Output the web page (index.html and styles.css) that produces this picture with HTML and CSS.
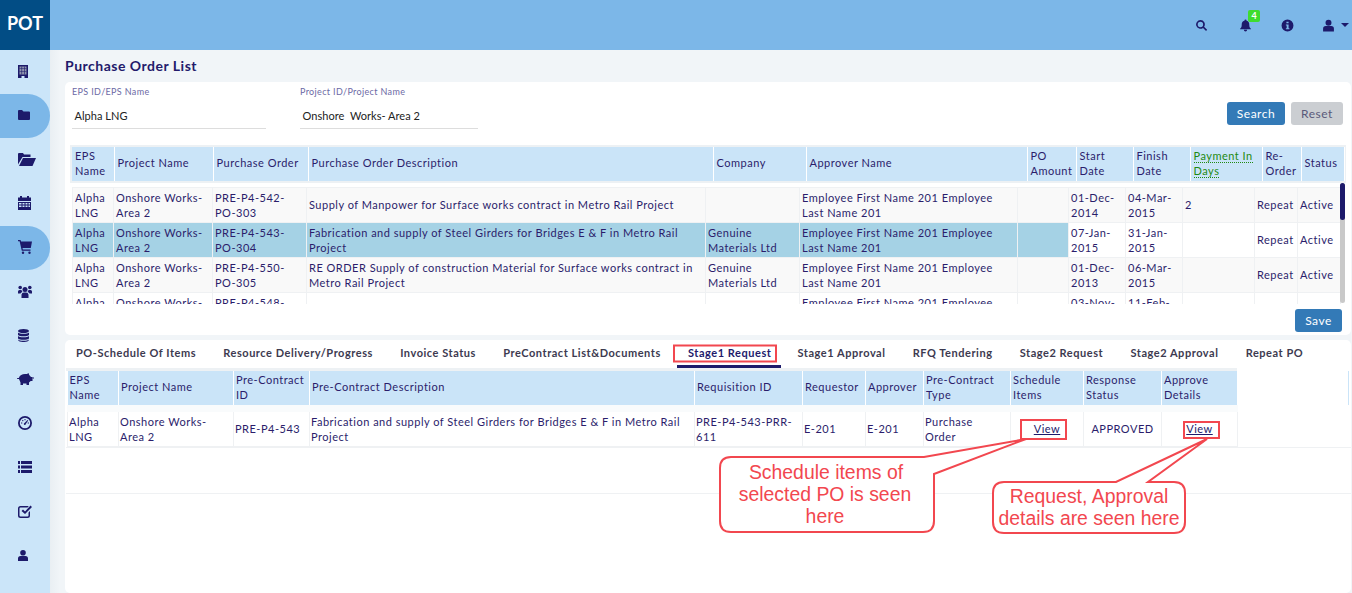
FILE: index.html
```html
<!DOCTYPE html>
<html lang="en">
<head>
    <meta charset="UTF-8">
    <title>Purchase Order List</title>
    <link rel="stylesheet" href="styles.css">
</head>
<body>
<div class="app">
    <aside class="sidebar">
        <div class="logo">POT</div>
        <nav class="side-nav">
            <a class="side-item"><svg class="side-icon" width="10" height="13" viewBox="0 0 10 13"><path d="M0 0h10v13H6.500v-2h-3v2H0z"/><path class="win" d="M1.500 1.500h7v8h-7z"/><path d="M3.500 1.500h.6v8h-.6z M6 1.500h.6v8H6z M1.500 3.500h7v.6h-7z M1.500 6h7v.6h-7z"/></svg></a>
            <a class="side-item active"><svg class="side-icon" width="12" height="10" viewBox="0 0 12 10"><path d="M0 1a1 1 0 0 1 1-1h3l1.500 1.500H11a1 1 0 0 1 1 1V9a1 1 0 0 1-1 1H1a1 1 0 0 1-1-1z"/></svg></a>
            <a class="side-item"><svg class="side-icon" width="18" height="13" viewBox="0 0 18 13"><path d="M0 11.500V1a1 1 0 0 1 1-1h4l1 1.500h6.500V4H4.500z"/><path d="M5 5h13l-3.500 8H1z"/></svg></a>
            <a class="side-item"><svg class="side-icon" width="13" height="14" viewBox="0 0 13 14"><path d="M2 0h2v1.500h5V0h2v1.500h2V5H0V1.500h2z"/><path fill-rule="evenodd" d="M0 6h13v8H0z M1 7v1.500h2.500V7z M4.500 7v1.500h2V7z M7.500 7v1.500h2V7z M10.500 7v1.500H12V7z M1 9.500V11h2.500V9.500z M4.500 9.500V11h2V9.500z M7.500 9.500V11h2V9.500z M10.500 9.500V11H12V9.500z"/></svg></a>
            <a class="side-item active"><svg class="side-icon" width="14" height="14" viewBox="0 0 14 14"><path d="M0 0h2.500l.6 1.500H14l-1.200 6.500H4.500l.3 1.500H12.500v1.200H3.800L1.600 1.200H0z"/><circle cx="5" cy="12.800" r="1.200"/><circle cx="11.500" cy="12.800" r="1.200"/></svg></a>
            <a class="side-item"><svg class="side-icon" width="14" height="13" viewBox="0 0 14 13"><circle cx="7" cy="4.500" r="2.500"/><circle cx="2.200" cy="2.500" r="1.800"/><circle cx="11.800" cy="2.500" r="1.800"/><path d="M3.500 13V9.500A2.500 2.500 0 0 1 6 7.500h2a2.500 2.500 0 0 1 2.500 2V13z M0 8.500V6.500A1.500 1.500 0 0 1 1.500 5H3.500a3.500 3.500 0 0 0 1 2 3.500 3.500 0 0 0-2 1.500z M14 8.500V6.500A1.500 1.500 0 0 0 12.500 5H10.500a3.500 3.500 0 0 1-1 2 3.500 3.500 0 0 1 2 1.500z"/></svg></a>
            <a class="side-item"><svg class="side-icon" width="11" height="13" viewBox="0 0 11 13"><ellipse cx="5.500" cy="2" rx="5.500" ry="2"/><path d="M0 3.500c1 1.700 10 1.700 11 0V6c-1 1.700-10 1.700-11 0z M0 7c1 1.700 10 1.700 11 0v2.500c-1 1.700-10 1.700-11 0z M0 10.500c1 1.700 10 1.700 11 0V11c-1 2.700-10 2.700-11 0z"/></svg></a>
            <a class="side-item"><svg class="side-icon piggy" width="17" height="12" viewBox="0 0 17 12"><path d="M11.500 0l.7 2 1.800 2h1.500v4h-1.800L12 9.500V12H9.500v-1.500H6V12H3.500V9.500L2 6H.3L0 5h1.800C3 2 5 1 8 1h2z"/><path d="M15.500 4.500h1.500v1h-1.500z"/></svg></a>
            <a class="side-item"><svg class="side-icon" width="14" height="14" viewBox="0 0 14 14"><path fill-rule="evenodd" d="M7 0a7 7 0 1 0 0 14a7 7 0 0 0 0-14z M7 1.800a5.200 5.200 0 1 1 0 10.400a5.200 5.200 0 0 1 0-10.400z"/><path d="M6.500 3h1v1.300h-1z M3 6.500h1.300v1H3z M9.700 6.500H11v1H9.700z M4 4.500l.8-.7.8 1-.7.7z M9.500 4l.7.6L7.800 8A1 1 0 1 1 6.500 7z"/></svg></a>
            <a class="side-item"><svg class="side-icon" width="14" height="12" viewBox="0 0 14 12"><path d="M0 0h2v3H0z M3 0h11v3H3z M0 4.500h2v3H0z M3 4.500h11v3H3z M0 9h2v3H0z M3 9h11v3H3z"/></svg></a>
            <a class="side-item"><svg class="side-icon" width="14" height="13" viewBox="0 0 14 13"><path d="M2.500 1h8.300L9.500 2.500h-7a1 1 0 0 0-1 1v7a1 1 0 0 0 1 1h7a1 1 0 0 0 1-1V7.500l1.500-1.500v4.500a2.500 2.500 0 0 1-2.500 2.500h-7A2.500 2.500 0 0 1 0 10.500v-7A2.500 2.500 0 0 1 2.500 1z"/><path d="M3.500 6l1.500-1.500 2 2L12.500 0.500 14 2 7 9z"/></svg></a>
            <a class="side-item"><svg class="side-icon" width="10" height="11" viewBox="0 0 10 11"><circle cx="5" cy="2.800" r="2.800"/><path d="M0 11V8.500A2.500 2.500 0 0 1 2.500 6h5A2.500 2.500 0 0 1 10 8.500V11z"/></svg></a>
        </nav>
    </aside>

    <div class="main">
        <header class="topbar">
            <svg class="top-icon search-icon" viewBox="0 0 24 24"><path d="M10 2a8 8 0 1 0 4.800 14.400l5.600 5.600 2-2-5.600-5.600A8 8 0 0 0 10 2z M10 5a5 5 0 1 1 0 10a5 5 0 0 1 0-10z" fill-rule="evenodd"/></svg>
            <span class="bell">
                <svg class="top-icon" viewBox="0 0 24 24"><path d="M12 1a2 2 0 0 1 2 2c4 1 5 4 5 8 0 4 1 5 3 7v1H2v-1c2-2 3-3 3-7 0-4 1-7 5-8a2 2 0 0 1 2-2z M9 20h6a3 3 0 0 1-6 0z"/></svg>
                <b class="badge">4</b>
            </span>
            <svg class="top-icon" viewBox="0 0 24 24"><path d="M12 1a11 11 0 1 0 0 22a11 11 0 0 0 0-22z M10 5h4v3h-4z M9 10h5v7h1.500v2h-6.500v-2h1.500v-5H9z" fill-rule="evenodd"/></svg>
            <span class="user-menu">
                <svg class="top-icon" viewBox="0 0 24 24"><circle cx="12" cy="7" r="5.500"/><path d="M2 23v-5a5 5 0 0 1 5-5h10a5 5 0 0 1 5 5v5z"/></svg>
                <i class="caret"></i>
            </span>
        </header>

        <div class="content">
            <h1 class="page-title">Purchase Order List</h1>

            <section class="card top-card">
                <form class="filter-row">
                    <div class="field field-eps">
                        <label>EPS ID/EPS Name</label>
                        <div class="field-value">Alpha LNG</div>
                    </div>
                    <div class="field field-project">
                        <label>Project ID/Project Name</label>
                        <div class="field-value">Onshore&nbsp; Works- Area 2</div>
                    </div>
                    <div class="filter-buttons">
                        <button type="button" class="btn btn-primary">Search</button>
                        <button type="button" class="btn btn-muted">Reset</button>
                    </div>
                </form>

                <div class="head-wrap">
                    <table class="grid po-head">
                        <colgroup><col class="h1"><col class="h2"><col class="h3"><col class="h4"><col class="h5"><col class="h6"><col class="h7"><col class="h8"><col class="h9"><col class="h10"><col class="h11"><col class="h12"></colgroup>
                        <tr>
                            <th>EPS Name</th><th>Project Name</th><th>Purchase Order</th><th>Purchase Order Description</th><th>Company</th><th>Approver Name</th><th>PO Amount</th><th>Start Date</th><th>Finish Date</th><th><span class="hint">Payment In Days</span></th><th>Re-Order</th><th>Status</th>
                        </tr>
                    </table>
                </div>

                <div class="po-scroll">
                    <table class="grid po-body">
                        <colgroup><col class="b1"><col class="b2"><col class="b3"><col class="b4"><col class="b5"><col class="b6"><col class="b7"><col class="b8"><col class="b9"><col class="b10"><col class="b11"><col class="b12"></colgroup>
                        <tr class="odd">
                            <td>Alpha LNG</td><td>Onshore Works-Area 2</td><td>PRE-P4-542-PO-303</td><td>Supply of Manpower for Surface works contract in Metro Rail Project</td><td></td><td>Employee First Name 201 Employee Last Name 201</td><td></td><td>01-Dec-2014</td><td>04-Mar-2015</td><td>2</td><td>Repeat</td><td>Active</td>
                        </tr>
                        <tr class="selected">
                            <td>Alpha LNG</td><td>Onshore Works-Area 2</td><td>PRE-P4-543-PO-304</td><td>Fabrication and supply of Steel Girders for Bridges E &amp; F in Metro Rail Project</td><td>Genuine Materials Ltd</td><td>Employee First Name 201 Employee Last Name 201</td><td></td><td class="plain">07-Jan-2015</td><td class="plain">31-Jan-2015</td><td class="plain"></td><td class="plain">Repeat</td><td class="plain">Active</td>
                        </tr>
                        <tr class="odd">
                            <td>Alpha LNG</td><td>Onshore Works-Area 2</td><td>PRE-P4-550-PO-305</td><td>RE ORDER Supply of construction Material for Surface works contract in Metro Rail Project</td><td>Genuine Materials Ltd</td><td>Employee First Name 201 Employee Last Name 201</td><td></td><td>01-Dec-2013</td><td>06-Mar-2015</td><td></td><td>Repeat</td><td>Active</td>
                        </tr>
                        <tr>
                            <td>Alpha LNG</td><td>Onshore Works-Area 2</td><td>PRE-P4-548-PO-306</td><td></td><td></td><td>Employee First Name 201 Employee Last Name 201</td><td></td><td>03-Nov-2014</td><td>11-Feb-2015</td><td></td><td>Repeat</td><td>Active</td>
                        </tr>
                    </table>
                    <div class="scroll-track"><div class="scroll-thumb"></div></div>
                </div>

                <div class="save-row">
                    <button type="button" class="btn btn-primary btn-save">Save</button>
                </div>
            </section>

            <section class="card bottom-card">
                <ul class="tabs">
                    <li>PO-Schedule Of Items</li>
                    <li>Resource Delivery/Progress</li>
                    <li>Invoice Status</li>
                    <li>PreContract List&amp;Documents</li>
                    <li class="current">Stage1 Request</li>
                    <li>Stage1 Approval</li>
                    <li>RFQ Tendering</li>
                    <li>Stage2 Request</li>
                    <li>Stage2 Approval</li>
                    <li>Repeat PO</li>
                </ul>
                <div class="tab-body">
                    <div class="req-band"></div>
                    <table class="grid req-table">
                        <colgroup><col class="r1"><col class="r2"><col class="r3"><col class="r4"><col class="r5"><col class="r6"><col class="r7"><col class="r8"><col class="r9"><col class="r10"><col class="r11"></colgroup>
                        <tr class="req-head">
                            <th>EPS Name</th><th>Project Name</th><th>Pre-Contract ID</th><th>Pre-Contract Description</th><th>Requisition ID</th><th>Requestor</th><th>Approver</th><th>Pre-Contract Type</th><th>Schedule Items</th><th>Response Status</th><th>Approve Details</th>
                        </tr>
                        <tr class="req-row">
                            <td>Alpha LNG</td><td>Onshore Works-Area 2</td><td>PRE-P4-543</td><td>Fabrication and supply of Steel Girders for Bridges E &amp; F in Metro Rail Project</td><td>PRE-P4-543-PRR-611</td><td>E-201</td><td>E-201</td><td>Purchase Order</td><td class="center"><a class="view-link">View</a></td><td class="center">APPROVED</td><td class="center"><a class="view-link">View</a></td>
                        </tr>
                    </table>
                    <div class="empty-row"></div>
                </div>
            </section>
        </div>
    </div>
</div>

<!-- red markup drawn on top of the screenshot -->
<svg class="markup" viewBox="0 0 1352 593">
    <rect class="mark" x="674" y="345.500" width="102" height="16"/>
    <rect class="mark" x="1021" y="420" width="45" height="19"/>
    <rect class="mark" x="1184" y="422" width="35" height="16"/>
    <path class="mark" d="M731 457H924L1026 439L934 474V521Q934 532 923 532H731Q720 532 720 521V468Q720 457 731 457Z"/>
    <path class="mark" d="M1004 482H1116L1207 439L1148 482H1174Q1185 482 1185 493V522Q1185 533 1174 533H1004Q993 533 993 522V493Q993 482 1004 482Z"/>
    <text class="mark-text" x="826" y="479">Schedule items of</text>
    <text class="mark-text" x="825" y="501">selected PO is seen</text>
    <text class="mark-text" x="825" y="523">here</text>
    <text class="mark-text" x="1089" y="503">Request, Approval</text>
    <text class="mark-text" x="1089" y="525">details are seen here</text>
</svg>
</body>
</html>
```
FILE: styles.css
```css
* {
    box-sizing: border-box;
}
html, body {
    margin: 0;
    height: 100%;
    overflow: hidden;
}
body {
    font-family: "Lato", sans-serif;
    font-size: 11px;
    letter-spacing: 0.5px;
    color: #2b1d6b;
    background-color: #f1f5f8;
}
.app {
    display: flex;
    height: 593px;
}

/* sidebar */
.sidebar {
    width: 50px;
    flex: none;
    background-color: #cbe5f9;
}
.logo {
    height: 50px;
    background-color: #024d85;
    color: white;
    font-size: 18px;
    font-weight: bold;
    letter-spacing: 0;
    line-height: 47px;
    text-align: center;
}
.side-nav {
    display: flex;
    flex-direction: column;
}
.side-item {
    height: 44px;
    display: flex;
    align-items: center;
    padding: 0 0 2px 18px;
}
.side-item.active {
    background-color: #7cb7e8;
    border-radius: 0 22px 22px 0;
}
.side-icon {
    display: block;
    fill: #1d1a6b;
}
.side-icon .win {
    fill: #8f93ad;
}
.piggy {
    margin-left: -1px;
}

/* top bar */
.main {
    flex: 1;
    min-width: 0;
    display: flex;
    flex-direction: column;
}
.topbar {
    height: 50px;
    flex: none;
    background-color: #7cb7e8;
    display: flex;
    align-items: center;
    justify-content: flex-end;
    gap: 29px;
    padding-right: 3px;
}
.top-icon {
    width: 13px;
    height: 13px;
    fill: #1d1a6b;
    display: block;
}
.search-icon {
    margin-right: 1px;
}
.bell {
    position: relative;
    margin-left: 1px;
}
.badge {
    position: absolute;
    left: 9px;
    top: -9px;
    width: 12px;
    height: 12px;
    border-radius: 2px;
    background-color: #3fdc2e;
    color: white;
    font-size: 9px;
    letter-spacing: 0;
    line-height: 11px;
    text-align: center;
}
.user-menu {
    display: flex;
    align-items: center;
    gap: 6px;
    margin-left: -1px;
}
.caret {
    border-left: 4px solid transparent;
    border-right: 4px solid transparent;
    border-top: 4px solid #1d1a6b;
}

/* content */
.content {
    flex: 1;
    padding: 0 1px 0 15px;
    background: linear-gradient(90deg, #e9eff3, #f1f5f8 10px);
}
.page-title {
    margin: 0;
    height: 32px;
    font-size: 14px;
    font-weight: bold;
    line-height: 32px;
    color: #231a6b;
}
.card {
    background-color: white;
    border-radius: 5px;
}
.top-card {
    height: 253px;
    padding-left: 7px;
    margin-bottom: 5px;
}
.bottom-card {
    height: 253px;
}

/* filter form */
.filter-row {
    height: 63px;
    display: flex;
    padding-top: 4px;
}
.field label {
    display: block;
    font-size: 9px;
    line-height: 11px;
    letter-spacing: 0.35px;
    color: #6d6aa5;
}
.field-value {
    height: 25px;
    margin-top: 7px;
    padding-left: 2.500px;
    line-height: 24px;
    color: #222;
    letter-spacing: 0.04px;
    border-bottom: 1px solid #ddd;
}
.field-eps {
    width: 194px;
}
.field-project {
    width: 178px;
    margin-left: 34px;
}
.filter-buttons {
    margin-left: auto;
    display: flex;
    gap: 6px;
    padding: 16px 8px 0 0;
}
.btn {
    height: 23px;
    padding: 0;
    border: none;
    border-radius: 3px;
    font-family: inherit;
    font-size: 12px;
    letter-spacing: 0.5px;
    color: white;
}
.btn-primary {
    width: 58px;
    background-color: #337ab7;
}
.btn-muted {
    width: 52px;
    background-color: #cbced2;
    color: #5a5a7a;
}

/* tables */
.grid {
    border-collapse: collapse;
    table-layout: fixed;
}
.grid th {
    font-weight: normal;
    text-align: left;
    line-height: 15px;
    padding: 0.600px 2px 3.400px;
    background-color: #cae4f8;
    border-right: 1px solid white;
}
.head-wrap {
    width: 1276px;
    margin-left: -2px;
    padding: 2px;
    background-color: #edf1f4;
}
.po-head {
    width: 1272px;
}
.po-head th {
    height: 34px;
    padding-left: 3px;
}
.hint {
    color: #1f8a12;
    border-bottom: 1px dotted #1f8a12;
}
.h1 { width: 42px; }
.h2 { width: 99px; }
.h3 { width: 95px; }
.h4 { width: 405px; }
.h5 { width: 93px; }
.h6 { width: 221px; }
.h7 { width: 49px; }
.h8 { width: 57px; }
.h9 { width: 57px; }
.h10 { width: 72px; }
.h11 { width: 39px; }
.h12 { width: 43px; }

.po-scroll {
    position: relative;
    height: 121px;
    padding-top: 4px;
    overflow: hidden;
}
.po-body {
    width: 1268px;
}
.grid td {
    height: 35px;
    padding: 1.600px 2px 2.400px;
    line-height: 15px;
    border: 1px solid #eff1f3;
    vertical-align: middle;
    overflow: hidden;
}
.b1 { width: 41px; }
.b2 { width: 99px; }
.b3 { width: 94px; }
.b4 { width: 399px; }
.b5 { width: 94px; }
.b6 { width: 218px; }
.b7 { width: 51px; }
.b8 { width: 57px; }
.b9 { width: 57px; }
.b10 { width: 72px; }
.b11 { width: 43px; }
.b12 { width: 43px; }
.odd td {
    background-color: #f9f9f9;
}
.selected td {
    background-color: #a5d2e5;
}
.selected td.plain {
    background-color: white;
}
.scroll-track {
    position: absolute;
    left: 1268px;
    top: 0;
    width: 5px;
    height: 120px;
    background-color: #c9c9c9;
    border-radius: 3px;
}
.scroll-thumb {
    height: 37px;
    background-color: #1d1a6b;
    border-radius: 3px;
}
.save-row {
    display: flex;
    justify-content: flex-end;
    padding: 5px 9px 0 0;
}
.btn-save {
    width: 47px;
}

/* tabs */
.tabs {
    list-style: none;
    margin: 0;
    padding: 0 0 0 11px;
    height: 28px;
    display: flex;
    font-weight: bold;
    letter-spacing: 0.54px;
    color: #3d3a50;
    line-height: 26px;
    white-space: nowrap;
}
.tabs li {
    padding: 0 13.600px 0 0;
    margin-right: 13.600px;
}
.tabs li.current {
    color: #231a6b;
    margin-left: -11px;
    padding: 0 10px 0 11px;
    margin-right: 16px;
    border-bottom: 3px solid #1d1a6b;
}
.tab-body {
    position: relative;
    padding-left: 2px;
}
.tab-body::after {
    content: "";
    position: absolute;
    right: 2px;
    top: 3px;
    width: 1px;
    height: 34px;
    background-color: #cae4f8;
}
.req-band {
    width: 1171px;
    margin-left: -1px;
    height: 3px;
    background-color: #edf1f4;
}
.req-table {
    width: 1170px;
}
.req-head th {
    height: 34px;
}
.req-table .req-row td {
    height: 35px;
    padding-left: 1px;
    padding-right: 4px;
}
.req-table .req-row td.center {
    padding: 1.600px 2px 2.400px;
}
.req-table .req-head {
    border-bottom: 7px solid #f9fbfc;
}
.r1 { width: 51px; }
.r2 { width: 115px; }
.r3 { width: 76px; }
.r4 { width: 385px; }
.r5 { width: 108px; }
.r6 { width: 63px; }
.r7 { width: 58px; }
.r8 { width: 87px; }
.r9 { width: 73px; }
.r10 { width: 78px; }
.r11 { width: 76px; }
.center {
    text-align: center;
}
.view-link {
    color: #1d1a6b;
    text-decoration: underline;
}
.empty-row {
    height: 47px;
    margin-left: -1px;
    border-top: 1px solid #eff1f3;
    border-bottom: 1px solid #eff1f3;
}

/* red annotation layer */
.markup {
    position: absolute;
    left: 0;
    top: 0;
    width: 1352px;
    height: 593px;
    pointer-events: none;
}
.mark {
    fill: none;
    stroke: #f2474f;
    stroke-width: 2;
}
path.mark {
    fill: white;
}
.mark-text {
    fill: #f2474f;
    font-family: "Liberation Sans", sans-serif;
    font-size: 19.400px;
    letter-spacing: 0;
    text-anchor: middle;
}
```
